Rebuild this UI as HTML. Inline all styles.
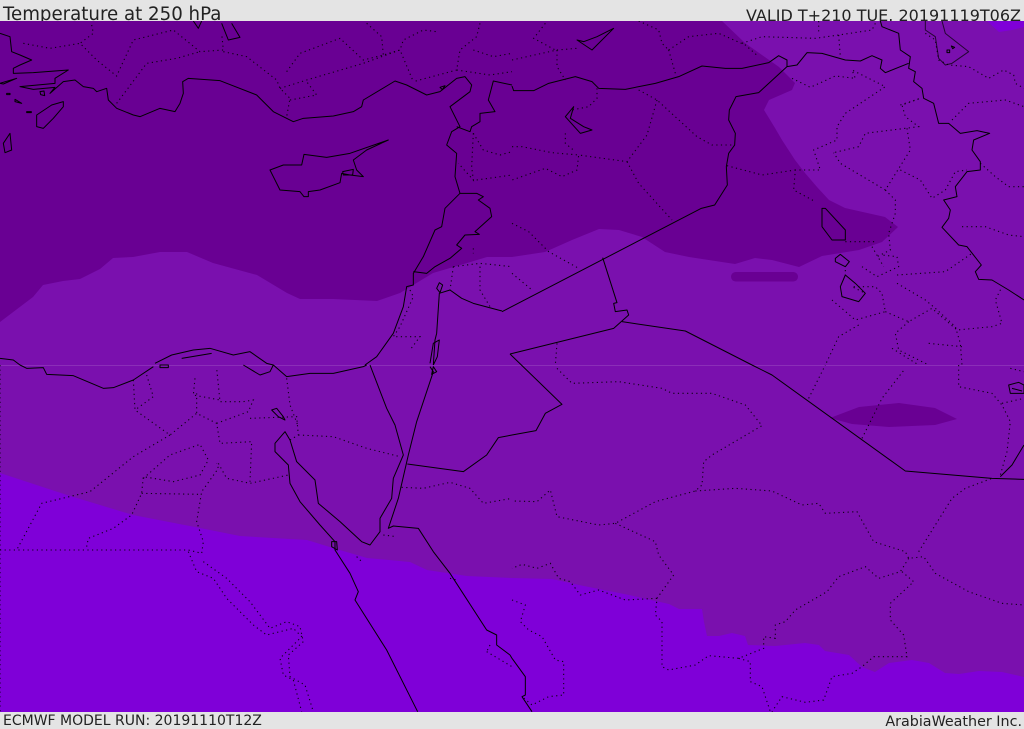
<!DOCTYPE html>
<html><head><meta charset="utf-8"><style>
html,body{margin:0;padding:0;background:#e4e4e4}
#p{position:relative;width:1024px;height:729px;overflow:hidden;background:#e4e4e4;font-family:"DejaVu Sans","Liberation Sans",sans-serif;color:#222}
#p div{position:absolute;white-space:nowrap;line-height:1}
svg{position:absolute;left:0;top:21px}
.l path{fill:none;stroke:#000;stroke-width:1;stroke-linejoin:round;vector-effect:non-scaling-stroke}
.d path{fill:none;stroke:#000;stroke-opacity:.9;stroke-width:1.1;stroke-dasharray:1.2 3.4;vector-effect:non-scaling-stroke}
</style></head><body><div id="p">
<div style="left:3px;top:6px;font-size:18.2px">Temperature at 250 hPa</div>
<div style="right:3px;top:8px;font-size:16px">VALID T+210 TUE. 20191119T06Z</div>
<div style="left:3px;top:714px;font-size:14px">ECMWF MODEL RUN: 20191110T12Z</div>
<div style="right:2px;top:715px;font-size:14.3px">ArabiaWeather Inc.</div>
<svg width="1024" height="691" viewBox="0 21 1024 691">
<rect x="0" y="21" width="1024" height="691" fill="#7a10ae"/>
<path fill="#7f00d8" d="M0 473L67 495L133 515L200 528L240 536L307 540L333 548L367 558L410 562L427 570L467 576L512 578L552 579L579 585L629 595L669 604L679 609L702 609L704 622L707 636L719 636L732 633L745 636L748 645L775 646L805 643L819 645L825 651L849 655L862 667L875 672L889 663L912 660L929 663L945 673L959 674L979 671L1002 672L1024 677V712H0Z"/>
<path fill="#690093" d="M0 322L33 297L43 285L63 281L80 279L100 269L113 258L133 257L160 252L187 252L213 263L257 275L287 293L300 299L333 299L377 301L400 293L433 273L467 263L487 257L512 257L545 252L572 240L599 229L619 230L642 237L665 252L689 257L735 264L755 258L772 260L799 267L822 256L859 250L882 242L898 227L885 217L845 208L829 200L817 187L805 173L795 160L782 140L775 128L764 110L769 100L792 90L795 83L779 67L745 43L722 21H0Z"/>
<rect x="731" y="272" width="67" height="9.5" rx="4.7" fill="#690093"/>
<path fill="#690093" d="M830 418L859 407L899 403L935 408L957 419L935 425L889 427L852 424Z"/>
<path fill="#7f00d8" d="M987 21L999 32L1012 30L1024 27V21Z"/>
<path d="M0 365.5H1024" stroke="#fff" stroke-opacity=".13" stroke-width="1"/>

<g transform="translate(0,0) scale(.33333)">
<g class="d">
<path d="M275 75L280 100L240 130L290 180L350 228L365 195L400 120L520 90L600 155L670 150L665 100"/>
<path d="M70 130L150 145L240 130"/>
<path d="M860 215L900 160L1020 115L1090 180L1150 165L1200 150L1210 120L1270 90L1310 95"/>
<path d="M1100 70L1145 110L1150 165"/>
<path d="M670 155L740 170L830 240L840 265L870 295L860 350"/>
<path d="M350 310L410 230L440 190L530 175L600 155"/>
<path d="M840 265L920 240L1090 190L1200 150L1240 245"/>
<path d="M870 300L950 285L920 245"/>
<path d="M1440 70L1430 110L1380 150L1370 210L1240 245"/>
<path d="M1420 400L1415 500L1420 540L1375 490"/>
<path d="M1420 400L1450 450L1500 465L1536 455"/>
<path d="M1430 540L1536 525"/>
<path d="M1370 210L1470 225L1536 215"/>
<path d="M1420 150L1480 170L1536 160"/>
<path d="M1230 870L1240 890L1200 980L1180 1010L1260 1010L1230 1050"/>
<path d="M1360 800L1350 870M1440 800L1440 870L1470 920M1360 800L1440 790L1536 800"/>
<path d="M1420 745V760"/>
</g>
<g class="l">
<path d="M0 100L30 110L35 155L60 165L95 180L60 195L40 205L40 220L100 218L205 210L165 235L165 250L60 260L100 268L165 262L150 280L190 245L225 240L250 260L280 265L290 275L320 265L325 300L350 325L400 345L420 350L480 325L525 335L540 310L550 280L548 245L565 235L660 242L770 285L820 335L880 365L910 355L1000 348L1060 335L1085 320L1090 300L1185 243L1220 255L1280 285L1320 275L1370 235L1395 230L1415 255L1410 275L1350 320L1380 380L1355 395L1340 435L1370 460L1365 530L1380 580L1335 625L1325 680L1305 690L1270 770L1240 820L1240 855L1220 860L1210 920L1180 1000L1130 1070L1095 1095"/>
<path d="M1370 380L1410 395L1415 380L1440 365L1440 340L1485 335L1465 300L1480 243L1536 255"/>
<path d="M1380 580H1430L1450 590L1435 600L1470 625L1475 650L1425 695L1438 703L1395 705L1370 735L1385 745L1350 775L1305 800L1280 820L1240 815"/>
<path d="M1506 933L1420 910L1385 895L1350 870L1318 880L1310 1000L1305 1020L1300 1095"/>
<path d="M1318 848L1328 855L1320 878L1310 865Z"/>
<path d="M810 510L850 495L905 495L912 463L980 472L1050 460L1165 420L1100 450L1060 480L1070 510L1090 530L1050 525L1025 520L1020 548L960 570L925 575L925 590L912 590L900 575L840 570L820 530Z"/>
<path d="M1028 515L1060 508L1058 525L1030 525Z"/>
<path d="M190 305L155 315L110 345L110 380L130 385L160 355L190 320Z"/>
<path d="M30 400L10 430L15 458L35 450Z"/>
<path d="M665 70L685 120L720 112L695 70"/>
<path d="M580 63L595 85L605 63"/>
<path d="M0 250L50 235L10 252Z M20 280h10v4h-10Z M45 298L65 310L45 305Z M80 335h14v3h-14Z M120 275l12 -2l2 14l-12 -3Z"/>
<path d="M1320 262l15 -5l-8 12Z"/>
<path d="M515 1065L580 1050L630 1045L700 1065L750 1055L800 1090L820 1095M465 1090L515 1065M545 1075L635 1060"/>
<path d="M1290 1090L1300 1030L1318 1020L1312 1070L1300 1095"/>
</g>
</g>

<g transform="translate(512,0) scale(.33333)">
<g class="d">
<path d="M0 180L135 150L195 145M135 150L135 200L160 240M100 70L65 115L130 150"/>
<path d="M470 150L530 110L620 100L700 135L740 170M470 150L490 220M380 63L440 90L450 130L470 150"/>
<path d="M690 130L750 110L910 115L980 105L1080 90L1090 70M980 105L985 170M920 63L920 100"/>
<path d="M840 235L895 262L970 228L1030 235L1020 210L1120 260L1000 340L975 380L975 420L905 450L925 510L850 510L845 570L910 605"/>
<path d="M645 497L750 525L850 510"/>
<path d="M255 265L255 295L230 320L180 330"/>
<path d="M380 270L435 300L555 410L600 435L668 435"/>
<path d="M435 300L405 405L345 485L200 465L195 510L150 530L100 505L0 540"/>
<path d="M345 485L380 550L480 660"/>
<path d="M0 440H30L120 458L200 465M160 400L160 430L190 455"/>
<path d="M0 670L50 695L110 755L200 805M0 820L60 870M1240 100L1270 120L1280 180L1310 195L1370 200L1430 235L1475 210L1505 225L1510 250L1536 265"/>
<path d="M1165 315L1225 295L1170 315L1180 350L1220 380L1060 400L1040 440L965 458"/>
<path d="M1185 385L1195 450L1120 570L985 490L965 458"/>
<path d="M1120 570L1150 600L1150 640L1130 700L1135 750L1095 770"/>
<path d="M1165 510L1225 540L1260 595L1300 570L1330 515L1365 510"/>
<path d="M1405 490L1450 530L1490 560L1536 560"/>
<path d="M1320 360L1370 310L1480 300L1536 320M1350 680L1420 680L1490 705L1536 710"/>
<path d="M1050 800L1095 830L1160 800L1155 770L1110 765M1155 825L1300 815L1380 760"/>
<path d="M1155 850L1240 900L1270 925L1330 980L1345 1030L1350 1095"/>
<path d="M960 900L1030 960L1120 935L1110 880L1090 860L1020 860L1060 880"/>
<path d="M1120 935L1190 965L1260 925L1335 990L1440 980L1470 970L1450 900L1470 860"/>
<path d="M1190 965L1150 1000L1160 1050L1250 1095M1040 975L980 1010L940 1095M1250 1030L1350 1040M1140 1045L1220 1095"/>
<path d="M135 1030L130 1095M1000 725L1090 725M1080 740L1115 800"/>
<path d="M1000 810V825"/>
</g>
<g class="l">
<path d="M0 258L5 272L65 272L110 250L190 230L240 245L260 265L340 268L430 250L500 230L570 198L640 205L690 205L770 188L800 167L825 180L825 200L855 195L885 158L930 160L1000 180L1045 183L1080 167L1110 180L1105 205L1120 218L1190 190"/>
<path d="M1105 63L1110 80L1160 100L1165 150L1195 170L1190 205L1210 215L1205 245L1230 265L1235 295L1265 310L1280 370L1310 370L1345 400L1395 392L1433 400L1385 420L1380 450L1405 485L1405 510L1365 515L1330 560L1335 590L1295 600L1315 630L1310 655L1290 682L1340 735L1365 740L1408 795L1390 815L1400 838L1440 840L1490 870L1536 900"/>
<path d="M825 200L740 278L672 290L652 330L650 360L670 400L668 435L650 460L643 500L646 555L608 615L568 625L-30 935"/>
<path d="M-6 1062L305 985L350 945L345 930L310 935L305 910L315 908L272 773"/>
<path d="M330 965L520 993L720 1095"/>
<path d="M930 625L930 680L960 720L1000 720L1000 690L940 625Z"/>
<path d="M970 775L985 763L1012 785L1000 800L970 785Z"/>
<path d="M1000 825L985 860L990 890L1040 905L1060 880L1030 850Z"/>
<path d="M195 120L240 150L305 85L255 110L215 125Z"/>
<path d="M185 320L160 350L205 400L240 390L215 380L175 355Z"/>
<path stroke-opacity=".7" d="M1290 63L1300 100L1370 155L1320 190L1300 195L1280 175L1270 110L1240 90L1240 63"/>
<path d="M1305 150h8v8h-8ZM1318 138l10 4l-6 4Z"/>
</g>
</g>

<g transform="translate(0,365) scale(.33333)">
<g class="d">
<path d="M0 555H565L605 565L610 530L590 470L605 380L655 310L650 295"/>
<path d="M400 45L405 135L510 210L590 145M440 30L460 95L405 135"/>
<path d="M510 210L400 275L270 380L125 415L50 555"/>
<path d="M430 340L510 270L600 238L625 285L600 330L520 350L430 335L425 385L395 450L340 490L265 520L260 545M425 385L600 388"/>
<path d="M590 85L590 145L620 160L650 175L660 235L755 230L750 350"/>
<path d="M650 175L745 140L760 105L730 110L660 110L650 10M585 40L580 90L660 105"/>
<path d="M655 295L680 340L750 355L865 330M750 160L890 155L895 210L870 225M860 40L870 120L895 185"/>
<path d="M895 210L1000 215L1100 250L1200 275"/>
<path d="M1205 367L1270 370L1350 352L1410 370L1450 415L1536 400"/>
<path d="M565 560L590 620L640 640L680 700L760 780L800 810L880 790L905 815L860 860L840 880L850 930L880 945L905 1040"/>
<path d="M610 590L680 640L750 710L810 790L860 770L900 785L910 830L865 870L870 935L915 960L940 1040"/>
<path d="M1150 510L1190 515M1460 860L1536 905M1470 840L1460 860M1350 640L1370 645M1070 575L1085 590"/>
<path d="M0 0V1040"/>
</g>
<g class="l">
<path d="M0 -20L40 -15L60 0L80 10L130 8L140 28L220 32L310 70L340 68L400 45L460 5"/>
<path d="M730 0L780 30L810 20L820 0L860 35L930 25L1000 25L1090 5L1100 0"/>
<path d="M1110 0L1160 130L1185 180L1210 270L1180 340L1175 400L1140 460L1140 500L1110 540L1085 530L1020 470L955 415L945 345L890 290L870 225L855 200L825 235L825 260L865 300L870 355L900 410L960 480L1005 530L1005 555L1050 625L1075 680L1065 705L1160 855L1253 1040"/>
<path d="M1225 270L1195 400L1165 490L1180 483L1255 490L1300 560L1350 625L1460 795L1490 810L1490 840L1530 870L1536 880"/>
<path d="M1225 270L1250 170L1290 50L1300 20L1290 5M1300 5L1310 20L1295 28Z"/>
<path d="M1222 297L1390 320L1460 270L1495 218L1536 210"/>
<path d="M815 135L830 130L850 155L855 165L835 155Z"/>
<path d="M995 530L1010 530L1012 555L995 545Z"/>
<path d="M480 0H505V8H480Z"/>
</g>
</g>

<g transform="translate(512,365) scale(.33333)">
<g class="d">
<path d="M135 10L180 55L320 50L450 70L480 85L600 85L700 120L750 182L600 270L575 290L570 360L550 378L430 410L310 475L260 480L135 455L115 375L75 410L0 408"/>
<path d="M550 378L670 370L780 378L870 420L920 415L940 445L1035 440L1085 530L1180 560L1190 580L1235 575L1270 625L1370 680L1470 715L1536 720"/>
<path d="M1190 580L1165 620L1100 640L1060 605L980 635L945 680L850 735L820 770L790 780L790 820L755 815L755 850L680 880L590 872L550 900L470 915L450 905L450 770L430 750L435 700L485 630L440 570L430 530L310 475"/>
<path d="M435 700L340 705L260 675L205 690L175 650L140 640L115 595L75 610L30 598L0 610"/>
<path d="M1170 620L1205 650L1135 715L1135 765L1175 810L1185 875L1085 875L1050 905L1020 925L960 935L935 1005L880 1012L810 995L780 1040"/>
<path d="M680 880L715 890L715 950L750 965L775 1040"/>
<path d="M0 705L40 720L25 770L50 795L90 815L130 885L155 890L155 990L110 995L60 1020L30 995"/>
<path d="M1220 560L1320 400L1360 370L1440 340M890 100L940 0M1050 220L1110 100L1180 10"/>
<path d="M1340 0L1340 65L1440 85L1470 120L1495 170L1485 260L1465 330M1470 115L1536 100M1495 10L1536 20"/>
</g>
<g class="l">
<path d="M-6 -33L150 118L100 145L72 197L0 210"/>
<path d="M720 0L780 30L1180 318L1440 340L1536 343"/>
<path d="M1465 335L1500 300L1536 240"/>
<path d="M0 880L40 935L40 990L30 995L60 1040"/>
<path d="M1490 60L1520 52L1536 60V85L1495 85ZM1500 70L1530 78"/>
</g>
</g>
</svg>
</div></body></html>
